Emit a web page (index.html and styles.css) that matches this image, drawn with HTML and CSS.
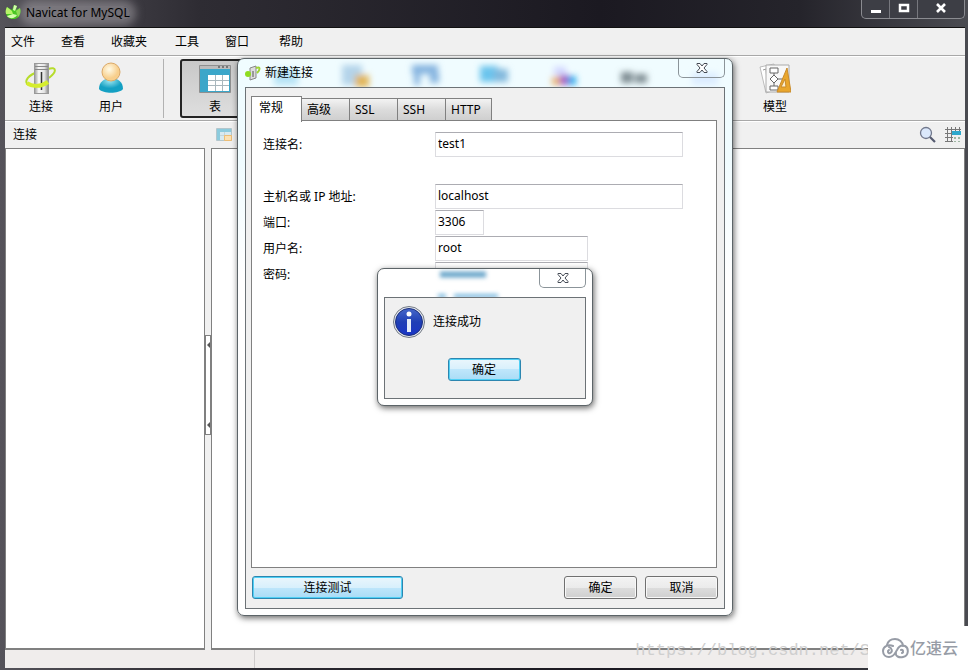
FILE: index.html
```html
<!DOCTYPE html>
<html lang="zh-CN">
<head>
    <meta charset="utf-8" />
    <title>Navicat for MySQL</title>
    <link rel="stylesheet" href="styles.css">
</head>
<body>
    <div class="window">
        <header class="titlebar">
            <svg class="app-icon" width="16" height="16" viewBox="0 0 16 16">
                <path d="M2 3l5 3 2-5 3 1-1 4 4-2c2 5-1 11-7 11C2 15-1 9 2 3Z" fill="#46c81f"/>
                <path d="M2 3l5 4 1 3-7 0C0 7 1 5 2 3Z" fill="#b8f36a"/>
                <path d="M9 1l3 1-2 5-2-1ZM2 12l6-2 4 1c-2 4-8 4-10 1Z" fill="#d6ffae"/>
                <path d="M11 7l4-3c1 4 0 7-2 9Z" fill="#8de649"/>
            </svg>
            <span class="titlebar-text">Navicat for MySQL</span>
            <div class="window-buttons">
                <button aria-label="最小化"><svg width="12" height="12" viewBox="0 0 12 12"><path d="M1 8h10v3H1z" fill="#fff"/></svg></button>
                <button aria-label="最大化"><svg width="12" height="12" viewBox="0 0 12 12"><path d="M2 3h8v6H2z" fill="none" stroke="#fff" stroke-width="2.500"/></svg></button>
                <button class="window-close" aria-label="关闭"><svg width="12" height="12" viewBox="0 0 12 12"><path d="M2 2l8 8M10 2L2 10" stroke="#fff" stroke-width="2.600"/></svg></button>
            </div>
        </header>

        <main class="client">
            <nav class="menu">
                <button>文件</button>
                <button>查看</button>
                <button class="wide">收藏夹</button>
                <button>工具</button>
                <button class="narrow">窗口</button>
                <button>帮助</button>
            </nav>

            <div class="toolbar">
                <button class="tool">
                    <svg width="32" height="34" viewBox="0 0 32 34">
                        <defs><linearGradient id="metal"><stop offset="0" stop-color="#9a9a9a"/><stop offset=".3" stop-color="#f8f8f8"/><stop offset=".7" stop-color="#e4e4e4"/><stop offset="1" stop-color="#888"/></linearGradient></defs>
                        <path d="M10 12C1 16-1 22 4 24M23 8c9-3 9 3 1 9" fill="none" stroke="#b6dc2c" stroke-width="2"/>
                        <rect x="9.500" y="2.500" width="14" height="30" fill="url(#metal)" stroke="#999"/>
                        <path d="M10 5.500h13M10 8.500h13" stroke="#888"/>
                        <path d="M16.500 11v18" stroke="#333" stroke-width="1.500"/>
                        <path d="M2 22c5 4 14 4 21-1" fill="none" stroke="#d5ec2e" stroke-width="4"/>
                    </svg>
                    <span>连接</span>
                </button>
                <button class="tool">
                    <svg width="32" height="34" viewBox="0 0 32 34">
                        <defs>
                            <radialGradient id="face" cx=".4" cy=".35"><stop offset="0" stop-color="#fffbe8"/><stop offset="1" stop-color="#f8cf8c"/></radialGradient>
                            <radialGradient id="shirt" cx=".45" cy=".2"><stop offset="0" stop-color="#9be6f1"/><stop offset="1" stop-color="#14a0c3"/></radialGradient>
                        </defs>
                        <path d="M4 28c0-7 5-11 12-11s12 4 12 11c-4 5-20 5-24 0Z" fill="url(#shirt)"/>
                        <circle cx="16" cy="11" r="9" fill="url(#face)" stroke="#dba968"/>
                    </svg>
                    <span>用户</span>
                </button>
                <span class="tool-separator"></span>
                <button class="tool active">
                    <svg width="32" height="34" viewBox="0 0 32 34">
                        <path d="M.5 4.500h31v27H.5z" fill="#bcbcbc" stroke="#8f8f8f"/>
                        <path d="M1 8h30v23H1z" fill="#3ba6c9"/>
                        <path d="M9 14h21v16H9z" fill="#fff"/>
                        <path d="M9 19.500h21M9 24.500h21M16.500 14v16M23.500 14v16" stroke="#a9b7bd"/>
                        <path d="M19 6h2M23 6h2M27 6h2" stroke="#777" stroke-width="2"/>
                    </svg>
                    <span>表</span>
                </button>
                <button class="tool model">
                    <svg width="32" height="34" viewBox="0 0 32 34">
                        <path d="M1 6l14-3 4 25-12 4Z" fill="#fff" stroke="#bbb"/>
                        <path d="M4 9l3-1 1 12" fill="none" stroke="#999"/>
                        <path d="M7 4h23v27H7z" fill="#f8f8f8" stroke="#aaa"/>
                        <path d="M11 7h8v5h-8zM11 25h8v4h-8zM15 14l4 4-4 4-4-4ZM15 12v2M15 22v3M19 18h5" fill="#fff" stroke="#666"/>
                        <path d="M28 7l4 24H18Z" fill="#e9a62c" stroke="#c98b2b"/>
                        <path d="M26 18l1 8h-5Z" fill="#fbeed0" stroke="#c98b2b"/>
                    </svg>
                    <span>模型</span>
                </button>
            </div>

            <div class="subbar">
                <span class="subbar-title">连接</span>
                <svg width="16" height="16" viewBox="0 0 16 16">
                    <path d="M.5 1.500h15v12H.5z" fill="#d7eaf0" stroke="#b3c6cc"/>
                    <path d="M1 2h14v3H1zM1 5h3v8H1z" fill="#8ccbdd"/>
                    <path d="M4 8.500h10M8.500 5v8" stroke="#c5d5d9"/>
                    <path d="M8.500 8.500h7v5h-7z" fill="#fce1b2" stroke="#edbd75"/>
                </svg>
                <div class="subbar-tools">
                    <svg width="18" height="18" viewBox="0 0 18 18">
                        <circle cx="7" cy="7" r="5.500" fill="#dbe8fb" stroke="#71788c" stroke-width="1.300"/>
                        <path d="M11 11l5 5" stroke="#555b70" stroke-width="2.200"/>
                    </svg>
                    <svg width="18" height="18" viewBox="0 0 18 18">
                        <path d="M1 3.500h16M1 7.500h16M1 11.500h8M1 15.500h8M3.500 1v15M7.500 1v15M11.500 1v6M15.500 1v6" stroke="#777"/>
                        <path d="M8 5h9v4H8z" fill="#2da8cc"/>
                        <path d="M10 11h2v2h-2zM14 11h2v2h-2zM10 15h2v1h-2zM14 15h2v1h-2z" fill="#9eb7a2"/>
                    </svg>
                </div>
            </div>

            <div class="workspace">
                <section class="pane tree-pane"></section>
                <div class="splitter">
                    <div class="splitter-grip"><i></i><i></i></div>
                </div>
                <section class="pane object-pane"></section>
            </div>

            <footer class="statusbar"><span class="status-cell"></span></footer>
        </main>
    </div>

    <span class="blog-url">https://blog.csdn.net/S</span>
    <div class="site-logo">
        <svg width="27" height="22" viewBox="0 0 27 22">
            <g fill="none" stroke="#979ca6" stroke-width="2" stroke-linecap="round">
                <path d="M5 8C6 4 9 2 13 2s8 3 8 7"/>
                <path d="M11 9C7 7 1 9 1 14c0 4 3 6 6 6 5 0 6-4 8-7 2-4 5-5 8-4 4 2 4 10-2 11-4 1-8-1-7-4"/>
                <path d="M7 13c-2 1-1 4 1 3 3-1 2-5-1-6M20 16c2-1 1-4-1-3"/>
            </g>
        </svg>
        <span>亿速云</span>
    </div>

    <!-- new connection dialog -->
    <div class="dialog connection-dialog" role="dialog" aria-labelledby="dialog-title">
        <svg class="glass" width="494" height="28" viewBox="0 0 494 28">
            <defs><filter id="soft" x="-30%" y="-80%" width="160%" height="260%"><feGaussianBlur stdDeviation="3"/></filter></defs>
            <g filter="url(#soft)">
                <path d="M36 10h24v16H36z" fill="#b7e3f5"/>
                <path d="M104 6h20v20h-20z" fill="#b4d4ea"/><path d="M117 16h14v12h-14z" fill="#e2b557"/>
                <path d="M174 6h26v9h-26zM176 14h6v12h-6zM192 14h9v10h-9z" fill="#84b3df"/>
                <path d="M242 7h18v16h-18z" fill="#6bc4ed"/><path d="M256 10h14v13h-14z" fill="#83b9dd"/>
                <path d="M316 8h12v8h-12z" fill="#d1d5ff"/><path d="M314 18h10v8h-10z" fill="#e9ad68"/><path d="M322 16h9v10h-9z" fill="#a456c5"/><path d="M330 17h8v9h-8z" fill="#27a9ec"/>
                <path d="M383 13h12v11h-12zM397 15h12v9h-12z" fill="#7e8c92"/>
                <path d="M454 14h26v12h-26z" fill="#dcecff"/>
            </g>
        </svg>
        <div class="dialog-head">
            <svg class="dialog-icon" width="16" height="16" viewBox="0 0 16 16">
                <path d="M5 3l6-2v12l-6 2Z" fill="#ddd" stroke="#888"/>
                <path d="M8 6v6" stroke="#555"/>
                <path d="M11 3c5-2 4 2 1 5" fill="none" stroke="#9ed334" stroke-width="2"/>
                <circle cx="3" cy="9" r="3" fill="#8fdc20"/>
            </svg>
            <h1 id="dialog-title">新建连接</h1>
            <button class="dialog-close" aria-label="关闭"><svg width="12" height="10" viewBox="0 0 12 10"><path d="M1 .5h3L6 3 8 .5h3v1L8 5l3 3.500v1H8L6 7 4 9.500H1v-1L4 5 1 1.500Z" fill="#fff" stroke="#454b55"/></svg></button>
        </div>
        <div class="dialog-body connection-body">
            <div class="tabs" role="tablist">
                <button class="tab selected" role="tab" aria-selected="true">常规</button>
                <button class="tab" role="tab">高级</button>
                <button class="tab" role="tab">SSL</button>
                <button class="tab" role="tab">SSH</button>
                <button class="tab" role="tab">HTTP</button>
            </div>
            <form class="tab-panel">
                <div class="field name-field">
                    <label for="conn-name">连接名:</label>
                    <input type="text" id="conn-name" value="test1" />
                </div>
                <div class="field">
                    <label for="host">主机名或 IP 地址:</label>
                    <input type="text" id="host" value="localhost" />
                </div>
                <div class="field">
                    <label for="port">端口:</label>
                    <input type="text" id="port" class="short" value="3306" />
                </div>
                <div class="field">
                    <label for="user">用户名:</label>
                    <input type="text" id="user" class="medium" value="root" />
                </div>
                <div class="field">
                    <label for="password">密码:</label>
                    <input type="password" id="password" class="medium" />
                </div>
            </form>
            <div class="dialog-actions">
                <button class="btn primary test-btn">连接测试</button>
                <button class="btn">确定</button>
                <button class="btn">取消</button>
            </div>
        </div>
    </div>

    <!-- result message -->
    <div class="dialog message-dialog" role="alertdialog" aria-labelledby="message-text">
        <svg class="glass" width="214" height="28" viewBox="0 0 214 28">
            <defs><filter id="haze" filterUnits="userSpaceOnUse" x="40" y="-10" width="100" height="50"><feGaussianBlur stdDeviation="2"/></filter></defs>
            <g filter="url(#haze)">
                <path d="M62 5.500h46" stroke="#6ba6ca" stroke-width="6"/>
                <path d="M60 27h8M76 27h44" stroke="#7cb9df" stroke-width="4"/>
            </g>
        </svg>
        <div class="dialog-head">
            <button class="dialog-close" aria-label="关闭"><svg width="12" height="10" viewBox="0 0 12 10"><path d="M1 .5h3L6 3 8 .5h3v1L8 5l3 3.500v1H8L6 7 4 9.500H1v-1L4 5 1 1.500Z" fill="#fff" stroke="#454b55"/></svg></button>
        </div>
        <div class="dialog-body message-body">
            <div class="message-line">
                <svg width="32" height="32" viewBox="0 0 32 32">
                    <defs><linearGradient id="info" x1="0" y1="0" x2="0" y2="1"><stop offset="0" stop-color="#4668c9"/><stop offset=".5" stop-color="#1f3fb5"/><stop offset="1" stop-color="#1a35c6"/></linearGradient></defs>
                    <circle cx="16" cy="16" r="15.500" fill="#e4e8ee" stroke="#747b85"/>
                    <circle cx="16" cy="16" r="13.500" fill="url(#info)" stroke="#1c2f7c"/>
                    <circle cx="16" cy="8" r="2.500" fill="#fff"/>
                    <path d="M14 13h4v13h-4z" fill="#e5edf8"/>
                </svg>
                <p id="message-text">连接成功</p>
            </div>
            <button class="btn primary">确定</button>
        </div>
    </div>
</body>
</html>
```
FILE: styles.css
```css
* {
    box-sizing: border-box;
}
body, button, input {
    font-family: "Noto Sans", "Noto Sans CJK SC", sans-serif;
    font-size: 12px;
    line-height: 16px;
    color: #000;
}
body {
    margin: 0;
    position: relative;
    overflow: hidden;
}
button {
    padding: 0;
    border: 0;
    background: none;
}
svg {
    display: block;
    flex: none;
}

/* Main window */
.window {
    display: flex;
    flex-direction: column;
    min-height: 100vh;
    padding: 0 3px 2px 5px;
    background: linear-gradient(90deg, #55535a 0, #2e2c33 200px, #1b1921 600px, #25242b 800px, #4a4b51 100%);
}
.titlebar {
    display: flex;
    height: 27px;
}
.app-icon {
    margin-top: 4px;
}
.titlebar-text {
    height: 14px;
    margin: 6px 0 0 5px;
    line-height: 14px;
    background: rgba(160, 156, 162, 0.55);
    box-shadow: 0 0 8px 6px rgba(160, 156, 162, 0.55);
    border-radius: 8px;
}
.window-buttons {
    display: flex;
    height: 19px;
    margin-left: auto;
    border: 1px solid #8a8b90;
    border-top: 0;
    border-radius: 0 0 5px 5px;
    background: #3d3e45;
}
.window-buttons button {
    display: flex;
    align-items: center;
    justify-content: center;
    width: 28px;
    padding-bottom: 2px;
    border-right: 1px solid #77787e;
}
.window-buttons .window-close {
    width: 46px;
    border-right: 0;
}
.client {
    display: flex;
    flex-direction: column;
    flex: 1;
    border-top: 1px solid #111;
    background: #f0f0f0;
}
.menu {
    display: flex;
    height: 28px;
    border-bottom: 1px solid #a8a8a8;
}
.menu button {
    width: 50px;
    padding: 0 6px;
    text-align: left;
}
.menu .wide {
    width: 64px;
}
.menu .narrow {
    width: 54px;
}
.toolbar {
    display: flex;
    height: 65px;
    padding: 2px 0 2px 1px;
    border-top: 1px solid #fff;
    border-bottom: 1px solid #a8a8a8;
}
.tool {
    display: flex;
    flex-direction: column;
    align-items: center;
    flex: none;
    width: 70px;
    gap: 4px;
    padding-top: 2px;
}
.tool-separator {
    flex: none;
    width: 1px;
    margin: 0 16px 0 17px;
    background: #b2b2b2;
}
.tool.active {
    padding: 0;
    border: 2px solid #242424;
    border-radius: 3px;
    background: linear-gradient(#c8c8c8, #dedede);
}
.tool.model {
    margin-left: 490px;
}
.subbar {
    display: flex;
    align-items: center;
    height: 27px;
    padding: 0 3px 0 8px;
    border-top: 1px solid #fff;
}
.subbar-title {
    width: 203px;
}
.subbar-tools {
    display: flex;
    gap: 7px;
    margin-left: auto;
}
.workspace {
    display: flex;
    flex: 1;
}
.pane {
    background: #fff;
    border: 1px solid #808080;
    border-bottom-width: 2px;
}
.tree-pane {
    flex: 0 0 200px;
}
.object-pane {
    flex: 1;
}
.splitter {
    display: flex;
    align-items: center;
    width: 6px;
    padding-bottom: 28px;
}
.splitter-grip {
    display: flex;
    flex-direction: column;
    justify-content: space-between;
    width: 6px;
    height: 100px;
    padding: 6px 1px;
    border: 1px solid #808080;
    background: #fff;
}
.splitter-grip i {
    border: 3px solid transparent;
    border-left: 0;
    border-right-color: #555;
}
.statusbar {
    display: flex;
    height: 18px;
    background: #f0edec;
}
.status-cell {
    width: 250px;
    border-right: 1px solid #cfcccc;
}

/* Dialogs */
.dialog {
    position: absolute;
    padding: 0 7px 6px;
    border: 1px solid #5c6468;
    border-radius: 7px;
    background: #fff;
    box-shadow: 1px 2px 6px rgba(0, 0, 0, 0.6);
}
.connection-dialog {
    top: 58px;
    left: 237px;
    width: 496px;
    background: linear-gradient(#f0fcff 0, #f0fcff 100px, #fff 220px);
}
.message-dialog {
    top: 268px;
    left: 377px;
    width: 216px;
    padding: 0 6px 6px;
}
.glass {
    position: absolute;
    top: 0;
    left: 0;
}
.dialog-head {
    display: flex;
    position: relative;
    height: 28px;
}
.dialog-icon {
    margin-top: 6px;
}
.dialog-head h1 {
    margin: 6px 0 0 4px;
    font-size: 12px;
    font-weight: normal;
}
.dialog-close {
    display: flex;
    align-items: center;
    justify-content: center;
    width: 47px;
    height: 19px;
    margin-left: auto;
    border: 1px solid #8b9499;
    border-top: 0;
    border-radius: 0 0 5px 5px;
}
.dialog-body {
    position: relative;
    border: 1px solid #6c7276;
    background: #f0f0f0;
}
.connection-body {
    padding: 8px 7px 9px 5px;
}
.tabs {
    display: flex;
    align-items: flex-end;
    height: 25px;
}
.tab {
    width: 48px;
    height: 23px;
    padding: 0 5px;
    border: 1px solid #808080;
    border-left: 0;
    background: linear-gradient(#f3f3f3, #dcdcdc 50%, #cfcfcf);
    text-align: left;
}
.tab.selected {
    position: relative;
    width: 51px;
    height: 26px;
    margin-bottom: -1px;
    padding: 0 7px 3px;
    border-left: 1px solid #808080;
    border-bottom: 0;
    background: #fff;
}
.tab:last-child {
    width: 46px;
}
.tab-panel {
    height: 448px;
    margin-top: -1px;
    padding: 10px 11px;
    border: 1px solid #808080;
    background: #fff;
}
.field {
    display: grid;
    grid-template-columns: 172px 1fr;
    align-items: center;
    height: 26px;
}
.field label {
    padding-top: 2px;
}
.name-field {
    margin-bottom: 26px;
}
.field input {
    width: 248px;
    height: 25px;
    padding: 0 2px 2px;
    border: 1px solid #dcdce0;
    border-top-color: #acacb2;
}
.field .short {
    width: 49px;
}
.field .medium {
    width: 153px;
}
.dialog-actions {
    display: flex;
    gap: 8px;
    margin: 8px -1px 0 1px;
}
.btn {
    width: 73px;
    height: 23px;
    border: 1px solid #707070;
    border-radius: 3px;
    background: linear-gradient(#f3f3f3, #ebebeb 50%, #dddddd 50%, #cfcfcf);
    box-shadow: inset 0 0 0 1px #f8f8f8;
}
.btn.primary {
    border-color: #2c86b0;
    background: linear-gradient(#eaf6fc, #d8f0fc 50%, #bee6fb 50%, #a9dcf6);
    box-shadow: inset 0 0 0 1px #4fd0f5;
}
.btn.test-btn {
    width: 151px;
    margin-right: auto;
}
.message-body {
    display: flex;
    flex-direction: column;
    align-items: center;
    padding: 8px 10px 17px 8px;
}
.message-line {
    display: flex;
    align-items: center;
    align-self: stretch;
    gap: 8px;
    margin-bottom: 20px;
}
.message-line p {
    margin: 0;
}

/* Watermarks */
.blog-url {
    position: absolute;
    right: 98px;
    bottom: 9px;
    font-family: "Liberation Mono", monospace;
    font-size: 17px;
    line-height: 20px;
    color: #cfcfcf;
}
.site-logo {
    display: flex;
    align-items: center;
    gap: 1px;
    position: absolute;
    right: 0;
    bottom: 0;
    width: 100px;
    height: 44px;
    padding-left: 14px;
    background: #fff;
    font-size: 16px;
    font-weight: 500;
    color: #979ca6;
}
```
